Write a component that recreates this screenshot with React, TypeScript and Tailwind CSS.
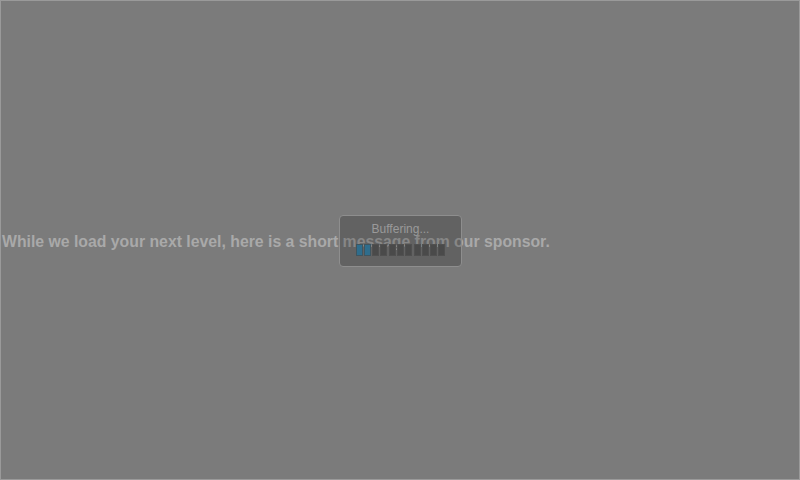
export default function App() {
  const segs = Array.from({ length: 11 }, (_, i) => i);
  return (
    <div
      className="relative w-[800px] h-[480px] bg-[#7b7b7b] border border-[#9a9a9a] flex items-center overflow-hidden"
      style={{ fontFamily: '"Liberation Sans", Arial, sans-serif' }}
    >
      <p className="pl-[1px] text-[15.8px] font-bold text-[#a9a9a9] whitespace-nowrap leading-none mt-[3px]">
        While we load your next level, here is a short message from our sponsor.
      </p>
      <div className="absolute left-[338px] top-[214px] w-[123px] h-[52px] rounded-[4px] border border-[#8e8e8e] bg-[rgba(0,0,0,0.2)] flex flex-col items-center pt-[6px]">
        <div className="text-[12px] leading-[14px] text-[#9a9a9a]">Buffering...</div>
        <div className="mt-[8px] flex gap-[1.3px]">
          {segs.map((i) => (
            <div
              key={i}
              className={
                i < 2
                  ? "w-[7px] h-[12px] border border-[#3e5560] bg-[#2f6d8c]"
                  : "w-[7px] h-[12px] border border-[#505050] bg-[#4a4a4a]"
              }
            />
          ))}
        </div>
      </div>
    </div>
  );
}
